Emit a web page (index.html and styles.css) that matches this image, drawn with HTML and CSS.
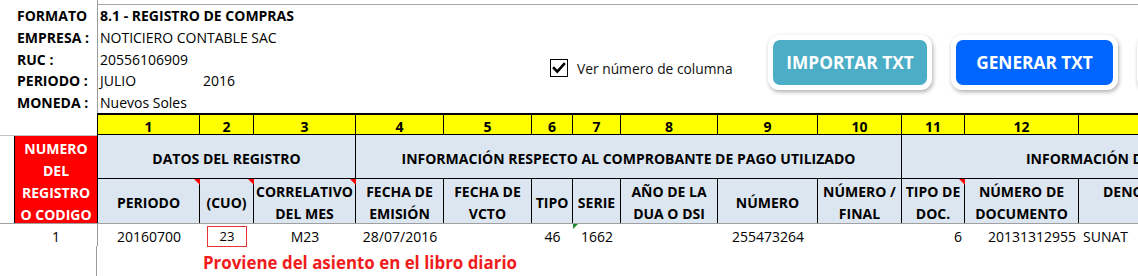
FILE: index.html
```html
<!DOCTYPE html>
<html lang="es">
<head>
<meta charset="utf-8">
<title>Registro de Compras</title>
<link rel="stylesheet" href="styles.css">
</head>
<body>
<div class="sheet">
  <div class="top">
    <div class="labels">
      <div class="ln b">FORMATO</div>
      <div class="ln b">EMPRESA :</div>
      <div class="ln b">RUC :</div>
      <div class="ln b">PERIODO :</div>
      <div class="ln b">MONEDA :</div>
    </div>
    <div class="main">
      <div class="values">
        <div class="ln b">8.1 - REGISTRO DE COMPRAS</div>
        <div class="ln">NOTICIERO CONTABLE SAC</div>
        <div class="ln">20556106909</div>
        <div class="ln period"><span class="month">JULIO</span><span>2016</span></div>
        <div class="ln">Nuevos Soles</div>
      </div>
      <label class="check">
        <span class="box"><svg viewBox="0 0 16 16" width="16" height="16"><path d="M3 8.2 L6.3 11.6 L13 4.2" fill="none" stroke="#000" stroke-width="2.6" stroke-linecap="square"/></svg></span>
        <span>Ver número de columna</span>
      </label>
      <div class="buttons">
        <div class="frame"><button class="btn import">IMPORTAR TXT</button></div>
        <div class="frame"><button class="btn generate">GENERAR TXT</button></div>
        <div class="frame"><button class="btn other">EXPORTAR</button></div>
      </div>
    </div>
  </div>

  <div class="grid">
    <!-- column numbers -->
    <div class="blank"></div>
    <div class="num first">1</div>
    <div class="num">2</div>
    <div class="num">3</div>
    <div class="num">4</div>
    <div class="num">5</div>
    <div class="num">6</div>
    <div class="num">7</div>
    <div class="num">8</div>
    <div class="num">9</div>
    <div class="num">10</div>
    <div class="num">11</div>
    <div class="num">12</div>
    <div class="num">13</div>
    <div class="num">14</div>

    <!-- group headers -->
    <div class="idcell">NUMERO<br>DEL<br>REGISTRO<br>O CODIGO</div>
    <div class="group first g-datos">DATOS DEL REGISTRO</div>
    <div class="group g-comp">INFORMACIÓN RESPECTO AL COMPROBANTE DE PAGO UTILIZADO</div>
    <div class="group g-prov">INFORMACIÓN DEL PROVEEDOR</div>

    <!-- sub headers -->
    <div class="sub first note">PERIODO</div>
    <div class="sub note">(CUO)</div>
    <div class="sub note">CORRELATIVO<br>DEL MES</div>
    <div class="sub">FECHA DE<br>EMISIÓN</div>
    <div class="sub">FECHA DE<br>VCTO</div>
    <div class="sub">TIPO</div>
    <div class="sub">SERIE</div>
    <div class="sub">AÑO DE LA<br>DUA O DSI</div>
    <div class="sub">NÚMERO</div>
    <div class="sub">NÚMERO /<br>FINAL</div>
    <div class="sub note">TIPO DE<br>DOC.</div>
    <div class="sub">NÚMERO DE<br>DOCUMENTO</div>
    <div class="sub wide">DENOMINACIÓN O RAZÓN<br>SOCIAL</div>
    <div class="sub"></div>

    <!-- data row -->
    <div class="d d-id">1</div>
    <div class="d c first">20160700</div>
    <div class="d c"><span class="cuo">23</span></div>
    <div class="d c">M23</div>
    <div class="d c">28/07/2016</div>
    <div class="d"></div>
    <div class="d c">46</div>
    <div class="d c flag">1662</div>
    <div class="d"></div>
    <div class="d c">255473264</div>
    <div class="d"></div>
    <div class="d r">6</div>
    <div class="d r">20131312955</div>
    <div class="d l">SUNAT</div>
    <div class="d"></div>

    <!-- note row -->
    <div class="e-id"></div>
    <div class="e-first"></div>
    <div class="remark">Proviene del asiento en el libro diario</div>
  </div>
</div>
</body>
</html>
```

FILE: styles.css
```css
* { box-sizing: border-box; }

html, body {
  margin: 0;
  padding: 0;
  background: #fff;
}

body {
  font-family: "Open Sans", "Noto Sans", sans-serif;
  font-size: 14px;
  color: #000;
  width: 1138px;
  height: 276px;
  overflow: hidden;
}

.sheet {
  width: 1138px;
  height: 276px;
  overflow: hidden;
  position: relative;
}

/* ---------- top block ---------- */
.top {
  display: flex;
  height: 113px;
}

.labels {
  width: 98px;
  flex: none;
  border-right: 1px solid #9c9c9c;
  padding: 5px 0 0 17px;
}

.ln {
  height: 21.75px;
  line-height: 21.75px;
  white-space: nowrap;
}

.b { font-weight: 700; }

.main {
  flex: 1;
  display: flex;
  margin-top: 4px;
  border-top: 1px solid #a8a8a8;
  min-width: 0;
}

.values {
  width: 452px;
  flex: none;
  padding-left: 2px;
}

.period { display: flex; }
.period .month { width: 103px; }

.check {
  width: 218px;
  flex: none;
  display: flex;
  align-items: center;
  gap: 9px;
  margin-top: 54px;
  height: 18px;
  font-size: 13.8px;
  color: #111;
  white-space: nowrap;
}

.box {
  width: 18px;
  height: 18px;
  border: 1px solid #000;
  display: flex;
  align-items: center;
  justify-content: center;
  background: #fff;
}

.buttons {
  display: flex;
  gap: 19px;
  margin-top: 30px;
  align-items: flex-start;
  flex: none;
}

.frame {
  padding: 5px;
  background: #fff;
  border-radius: 11px;
  box-shadow: 1px 2px 4px rgba(0, 0, 0, 0.32);
  flex: none;
}

.btn {
  display: block;
  height: 45px;
  border: 0;
  border-radius: 7px;
  color: #fff;
  font-family: "Open Sans", sans-serif;
  font-weight: 700;
  font-size: 17.3px;
  padding: 0;
  cursor: pointer;
}

.import { width: 154px; background: #4badc6; }
.generate { width: 157px; background: #0066ff; }
.other { width: 150px; background: #70ad47; }

/* ---------- grid ---------- */
.grid {
  display: grid;
  grid-template-columns: 97px 103px 54px 102px 88px 88px 41px 48px 97px 100px 84px 63px 114px 238px 55px;
  grid-template-rows: 22px 44px 44px 23px 31px;
  width: 1172px;
}

.blank { background: #fff; }

.num {
  background: #ffff00;
  border-top: 2px solid #000;
  border-right: 1px solid #000;
  border-bottom: 1px solid #000;
  font-weight: 700;
  text-align: center;
  line-height: 19px;
  padding-top: 2px;
}

.first { border-left: 1px solid #000; }

.idcell {
  grid-row: 2 / 4;
  grid-column: 1;
  background: linear-gradient(to right, #fff 0 14px, #000 14px 15px, #ff0000 15px);
  border-top: 1px solid #c4c4c4;
  color: #fff;
  font-weight: 700;
  text-align: center;
  padding: 2px 0 0 15px;
  line-height: 22px;
}

.group {
  background: #dce6f1;
  border-right: 1px solid #000;
  border-bottom: 1px solid #000;
  font-weight: 700;
  display: flex;
  align-items: center;
  justify-content: center;
  white-space: nowrap;
  padding-top: 3px;
}

.g-datos { grid-column: 2 / 5; }
.g-comp { grid-column: 5 / 12; }
.g-prov { grid-column: 12 / 16; }

.sub {
  background: #dce6f1;
  border-right: 1px solid #000;
  font-weight: 700;
  text-align: center;
  display: flex;
  align-items: center;
  justify-content: center;
  line-height: 22px;
  padding-top: 3px;
  white-space: nowrap;
  position: relative;
}

.sub.wide {
  justify-content: flex-start;
  padding-left: 24px;
}

.note::after {
  content: "";
  position: absolute;
  top: 0;
  right: -1px;
  border-top: 6px solid #ff0000;
  border-left: 6px solid transparent;
}

.d {
  border-top: 1px solid #a0a0a0;
  line-height: 22px;
  padding-top: 2px;
  white-space: nowrap;
  position: relative;
}

.d.first { border-left: 1px solid #9c9c9c; }

.d-id {
  text-align: center;
  padding-left: 15px;
}

.c { text-align: center; }
.r { text-align: right; padding-right: 3px; }
.l { text-align: left; padding-left: 4px; }

.flag::before {
  content: "";
  position: absolute;
  top: 0;
  left: 0;
  border-top: 5px solid #1e8a2e;
  border-right: 5px solid transparent;
}

.cuo {
  display: inline-block;
  width: 40px;
  height: 21px;
  line-height: 19px;
  border: 1px solid #e53333;
  font-size: 13px;
  vertical-align: top;
}

.e-id { grid-column: 1; border-right: 1px solid #9c9c9c; }
.e-first { grid-column: 2; }

.remark {
  grid-column: 3 / 16;
  color: #f01c1c;
  font-weight: 700;
  font-size: 16.9px;
  padding: 5px 0 0 3px;
  white-space: nowrap;
}
```
